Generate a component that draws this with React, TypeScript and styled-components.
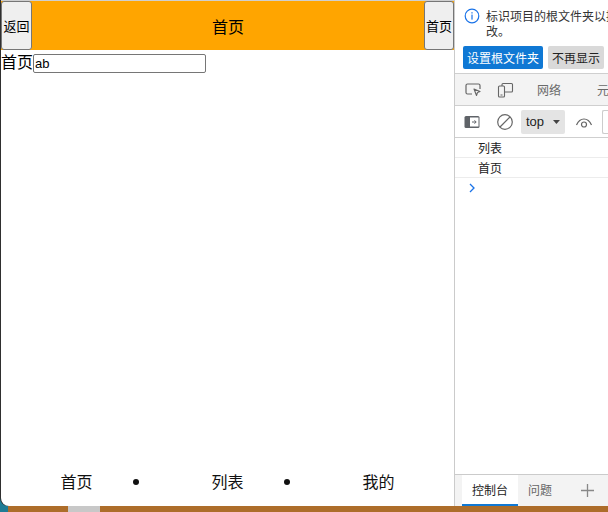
import React from "react";
import styled, { createGlobalStyle } from "styled-components";

const Global = createGlobalStyle`
  html, body { margin: 0; padding: 0; }
  body {
    width: 608px; height: 512px; overflow: hidden;
    background: #ad6d2a;
    font-family: "Noto Sans CJK SC", "Liberation Sans", sans-serif;
  }
  #root { height: 512px; }
`;

const Desktop = styled.div`
  display: flex;
  flex-direction: column;
  height: 512px;
  background: linear-gradient(to right, #1f7c95 0 8px, #ad6d2a 8px 68px, #c8c8c8 68px 100px, #ad6d2a 100px);
`;

const Window = styled.div`
  display: flex;
  height: 506px;
  margin-left: 1px;
  background: #fff;
  border-bottom-left-radius: 8px;
  overflow: hidden;
  box-shadow: -1px 0 0 #2f2f2f;
`;

const Sim = styled.div`
  width: 453px;
  flex-shrink: 0;
  border-right: 1px solid #cbcbcb;
  border-top: 1px solid #cfcfcf;
  display: flex;
  flex-direction: column;
  font-family: "Noto Sans CJK SC", sans-serif;
`;

const NavBar = styled.div`
  display: flex;
  height: 49px;
  background: #ffa500;
  align-items: stretch;
`;

const NavBtn = styled.button<{ $w: number }>`
  width: ${(p) => p.$w}px;
  padding: 0;
  margin: 0;
  background: #efefef;
  border: 1px solid #767676;
  border-radius: 3px;
  font-family: "Noto Sans CJK SC", sans-serif;
  font-size: 13px;
  color: #000;
`;

const Title = styled.div`
  flex: 1;
  display: flex;
  align-items: center;
  justify-content: center;
  font-size: 16px;
  color: #000;
`;

const Row = styled.div`
  display: flex;
  align-items: flex-start;
  margin-top: 1px;
  font-size: 16px;
  line-height: 21px;
  color: #000;
`;

const Input = styled.input`
  width: 169px;
  height: 15px;
  margin-top: 3px;
  padding: 1px 1px;
  border: 1px solid #767676;
  border-radius: 2px;
  font-family: "Liberation Sans", sans-serif;
  font-size: 13px;
  color: #000;
  outline: none;
`;

const Spacer = styled.div`
  flex: 1;
`;

const Tabs = styled.ul`
  display: flex;
  margin: 0 0 14px 0;
  padding: 0;
  list-style: disc outside;
`;

const Tab = styled.li`
  flex: 1;
  text-align: center;
  font-size: 16px;
  line-height: 22px;
  color: #111;
`;

const Dev = styled.div`
  flex: 1;
  min-width: 0;
  display: flex;
  flex-direction: column;
  font-size: 12px;
  color: #333;
  overflow: hidden;
  white-space: nowrap;
`;

const Info = styled.div`
  display: flex;
  gap: 6px;
  padding: 8px 0 0 9px;
  line-height: 15px;
`;

const InfoText = styled.div`
  white-space: normal;
  width: 266px;
  flex-shrink: 0;
  color: #333;
`;

const BtnRow = styled.div`
  display: flex;
  gap: 5px;
  padding: 8px 0 4px 8px;
`;

const DBtn = styled.div<{ $primary?: boolean }>`
  flex-shrink: 0;
  height: 23px;
  line-height: 23px;
  padding: 0 4px;
  border-radius: 2px;
  background: ${(p) => (p.$primary ? "#0f78d4" : "#d9d9d9")};
  color: ${(p) => (p.$primary ? "#fff" : "#222")};
  font-size: 12px;
`;

const Toolbar = styled.div<{ $bg: string }>`
  display: flex;
  align-items: center;
  height: 31px;
  border-top: 1px solid #cfcfcf;
  background: ${(p) => p.$bg};
  padding-left: 9px;
`;

const ToolIcon = styled.div<{ $w: number }>`
  width: ${(p) => p.$w}px;
  flex-shrink: 0;
  display: flex;
  align-items: center;
  justify-content: flex-start;
  color: #666;
`;

const ToolText = styled.div<{ $w: number }>`
  width: ${(p) => p.$w}px;
  flex-shrink: 0;
  color: #6a6a6a;
  font-size: 12px;
`;

const Ctx = styled.div`
  flex-shrink: 0;
  display: flex;
  align-items: center;
  gap: 9px;
  width: 44px;
  box-sizing: border-box;
  height: 24px;
  padding: 0 5px 0 5px;
  background: #e4e4e4;
  border-radius: 2px;
  font-family: "Liberation Sans", sans-serif;
  font-size: 13px;
  color: #222;
  margin-right: 10px;
`;

const Filter = styled.div`
  flex-shrink: 0;
  width: 20px;
  height: 22px;
  border: 1px solid #ccc;
  border-right: none;
  border-radius: 2px;
  background: #fff;
  margin-left: 9px;
`;

const Log = styled.div`
  height: 19px;
  line-height: 19px;
  padding-left: 23px;
  border-bottom: 1px solid #ececec;
  color: #222;
  font-size: 12px;
`;

const LogTop = styled.div`
  border-top: 1px solid #cfcfcf;
`;

const Prompt = styled.div`
  padding: 2px 0 0 12px;
  height: 18px;
`;

const Drawer = styled.div`
  display: flex;
  align-items: stretch;
  height: 31px;
  border-top: 1px solid #cbcbcb;
  background: #f3f3f3;
  padding-left: 7px;
`;

const DTab = styled.div<{ $active?: boolean }>`
  flex-shrink: 0;
  display: flex;
  align-items: center;
  padding: 0 10px;
  background: ${(p) => (p.$active ? "#fff" : "transparent")};
  color: ${(p) => (p.$active ? "#222" : "#666")};
  border-bottom: 2px solid ${(p) => (p.$active ? "#0f78d4" : "transparent")};
  font-size: 12px;
`;

const Plus = styled.div`
  flex-shrink: 0;
  display: flex;
  align-items: center;
  margin-left: 18px;
  color: #888;
`;

const InfoIcon = () => (
  <svg width="16" height="16" viewBox="0 0 16 16" style={{ flexShrink: 0 }}>
    <circle cx="8" cy="8" r="6.8" fill="none" stroke="#1a73e8" strokeWidth="1.2" />
    <rect x="7.4" y="6.6" width="1.2" height="5" fill="#1a73e8" />
    <rect x="7.4" y="4.2" width="1.2" height="1.3" fill="#1a73e8" />
  </svg>
);

const InspectIcon = () => (
  <svg width="18" height="16" viewBox="0 0 18 16">
    <path d="M8 12H3.5A1.5 1.5 0 0 1 2 10.5v-7A1.5 1.5 0 0 1 3.5 2h11A1.5 1.5 0 0 1 16 3.5V7" fill="none" stroke="#666" strokeWidth="1.2" />
    <path d="M10 7l6 2.5-2.5 1-1 3z" fill="none" stroke="#666" strokeWidth="1.1" strokeLinejoin="round" />
  </svg>
);

const DeviceIcon = () => (
  <svg width="18" height="18" viewBox="0 0 18 18">
    <rect x="2.5" y="5" width="6" height="11" rx="1" fill="none" stroke="#666" strokeWidth="1.1" />
    <path d="M6 5V3.5A1 1 0 0 1 7 2.5h8.5a1 1 0 0 1 1 1V10a1 1 0 0 1-1 1H9" fill="none" stroke="#666" strokeWidth="1.1" />
    <path d="M4.5 14h2" stroke="#666" strokeWidth="1" />
  </svg>
);

const SidebarIcon = () => (
  <svg width="16" height="14" viewBox="0 0 16 14">
    <rect x="0.5" y="1" width="15" height="12" rx="1.5" fill="#5f6368" />
    <rect x="6" y="2.5" width="8.5" height="9" fill="#fff" />
    <path d="M8 7h4M10.5 5.3 12.2 7 10.5 8.7" fill="none" stroke="#5f6368" strokeWidth="1" />
  </svg>
);

const ClearIcon = () => (
  <svg width="18" height="18" viewBox="0 0 18 18">
    <circle cx="9" cy="9" r="7.3" fill="none" stroke="#666" strokeWidth="1.2" />
    <path d="M4 14 14 4" stroke="#666" strokeWidth="1.2" />
  </svg>
);

const EyeIcon = () => (
  <svg width="18" height="12" viewBox="0 0 18 12" style={{ flexShrink: 0 }}>
    <path d="M1.5 9C3.5 4.5 6 3 9 3s5.5 1.5 7.5 6" fill="none" stroke="#666" strokeWidth="1.2" />
    <circle cx="9" cy="8.5" r="2.5" fill="none" stroke="#666" strokeWidth="1.2" />
  </svg>
);

const Caret = () => (
  <svg width="10" height="8" viewBox="0 0 10 8">
    <path d="M0 1h10L5 7z" fill="#444" />
  </svg>
);

const Chevron = () => (
  <svg width="10" height="12" viewBox="0 0 10 12">
    <path d="M3 2l4 4-4 4" fill="none" stroke="#1a73e8" strokeWidth="1.3" />
  </svg>
);

const PlusIcon = () => (
  <svg width="15" height="15" viewBox="0 0 15 15">
    <path d="M7.5 1v13M1 7.5h13" stroke="#888" strokeWidth="1.3" />
  </svg>
);

export default function App() {
  return (
    <>
      <Global />
      <Desktop>
        <Window>
          <Sim>
            <NavBar>
              <NavBtn $w={31}>返回</NavBtn>
              <Title>首页</Title>
              <NavBtn $w={30}>首页</NavBtn>
            </NavBar>
            <Row>
              首页
              <Input defaultValue="ab" />
            </Row>
            <Spacer />
            <Tabs>
              <Tab>首页</Tab>
              <Tab>列表</Tab>
              <Tab>我的</Tab>
            </Tabs>
          </Sim>
          <Dev>
            <Info>
              <InfoIcon />
              <InfoText>标识项目的根文件夹以提供更好的体验，可随时更改。</InfoText>
            </Info>
            <BtnRow>
              <DBtn $primary>设置根文件夹</DBtn>
              <DBtn>不再显示</DBtn>
            </BtnRow>
            <Toolbar $bg="#f3f3f3">
              <ToolIcon $w={32}><InspectIcon /></ToolIcon>
              <ToolIcon $w={41}><DeviceIcon /></ToolIcon>
              <ToolText $w={60}>网络</ToolText>
              <ToolText $w={30}>元素</ToolText>
            </Toolbar>
            <Toolbar $bg="#fff">
              <ToolIcon $w={32}><SidebarIcon /></ToolIcon>
              <ToolIcon $w={25}><ClearIcon /></ToolIcon>
              <Ctx>top<Caret /></Ctx>
              <EyeIcon />
              <Filter />
            </Toolbar>
            <LogTop />
            <Log>列表</Log>
            <Log>首页</Log>
            <Prompt><Chevron /></Prompt>
            <Spacer />
            <Drawer>
              <DTab $active>控制台</DTab>
              <DTab>问题</DTab>
              <Plus><PlusIcon /></Plus>
            </Drawer>
          </Dev>
        </Window>
      </Desktop>
    </>
  );
}
